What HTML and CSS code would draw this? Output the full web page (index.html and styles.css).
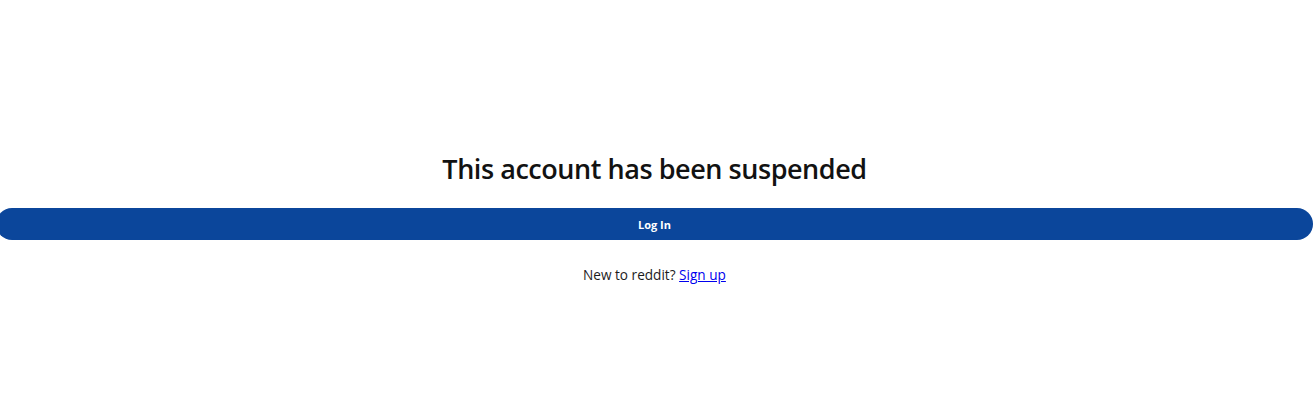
FILE: index.html
```html
<!DOCTYPE html>
<html lang="en">
<head>
<meta charset="utf-8">
<title>Account suspended</title>
<link rel="stylesheet" href="styles.css">
</head>
<body>
<main class="page">
  <h1 class="title">This account has been suspended</h1>
  <a class="login-btn" href="#">Log In</a>
  <p class="signup">New to reddit? <a class="signup-link" href="#">Sign up</a></p>
</main>
</body>
</html>
```
FILE: styles.css
```css
html, body {
  margin: 0;
  padding: 0;
  background: #ffffff;
}
body {
  font-family: "Open Sans", "Noto Sans", "Liberation Sans", sans-serif;
  color: #1c1c1c;
  overflow: hidden;
}
.page {
  display: flex;
  flex-direction: column;
  align-items: center;
  padding: 152px 5px 0 0;
}
.title {
  margin: 0;
  font-size: 27px;
  line-height: 34px;
  font-weight: 600;
  color: #121212;
  letter-spacing: -0.45px;
}
.login-btn {
  display: flex;
  align-items: center;
  justify-content: center;
  align-self: stretch;
  margin: 22px -4px 0 -4px;
  height: 32px;
  border-radius: 16px;
  background: #0b469b;
  color: #ffffff;
  font-size: 11px;
  font-weight: 700;
  text-decoration: none;
}
.signup {
  margin: 25px 0 0 0;
  font-size: 13.6px;
  line-height: 20px;
  color: #1c1c1c;
}
.signup-link {
  color: #0000ee;
  text-decoration: underline;
}
```
